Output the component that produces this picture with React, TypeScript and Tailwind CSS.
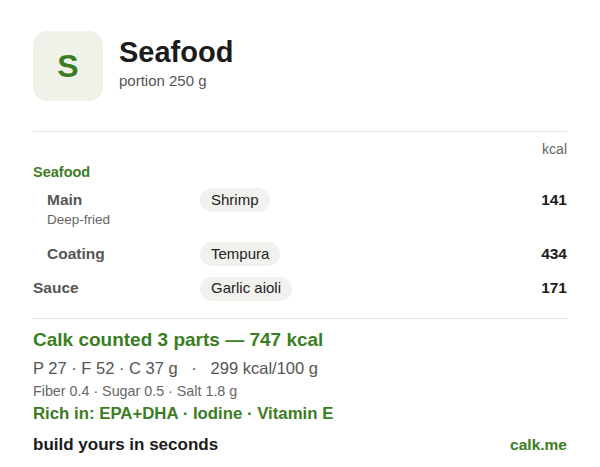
const items = [
  { label: "Main", note: "Deep-fried", pill: "Shrimp", kcal: 141, gap: "mt-[6px]" },
  { label: "Coating", note: "", pill: "Tempura", kcal: 434, gap: "mt-[14px]" },
];

const Pill = ({ text }: { text: string }) => (
  <span className="inline-flex h-6 items-center rounded-full bg-[#f1f1ed] px-[11px] text-[15px] text-[#222]">
    {text}
  </span>
);

export default function App() {
  return (
    <div className="min-h-[467px] w-[600px] bg-white px-[33px] pt-[31px] font-['Liberation_Sans',Arial,sans-serif]">
      <div className="flex items-start gap-4">
        <div className="flex h-[70px] w-[70px] items-center justify-center rounded-[14px] bg-[#eef2e8] text-[32px] font-bold text-[#3b7d23]">
          S
        </div>
        <div className="pt-[5px]">
          <div className="text-[29px] leading-8 font-bold text-[#1b1b1b]">Seafood</div>
          <div className="mt-[2px] text-[15px] text-[#555]">portion 250 g</div>
        </div>
      </div>

      <div className="mt-[30px] border-t border-[#e4e4e4]" />

      <div className="mt-[9px] text-right text-[14px] leading-4 text-[#666]">kcal</div>
      <div className="mt-[5px] text-[14.5px] leading-5 font-bold text-[#3b7d23]">Seafood</div>

      {items.map((it) => (
        <div key={it.label} className={`${it.gap} flex items-start`}>
          <div className="w-[167px] pl-[14px]">
            <div className="text-[15.5px] leading-6 font-bold text-[#555]">{it.label}</div>
            {it.note && <div className="text-[13.5px] leading-4 text-[#666]">{it.note}</div>}
          </div>
          <div className="flex-1">
            <Pill text={it.pill} />
          </div>
          <div className="text-[15.5px] leading-6 font-bold text-[#1b1b1b]">{it.kcal}</div>
        </div>
      ))}

      <div className="mt-[10px] flex items-start">
        <div className="w-[167px] text-[15.5px] leading-6 font-bold text-[#555]">Sauce</div>
        <div className="flex-1">
          <Pill text="Garlic aioli" />
        </div>
        <div className="text-[15.5px] leading-6 font-bold text-[#1b1b1b]">171</div>
      </div>

      <div className="mt-[17px] border-t border-[#e4e4e4]" />

      <div className="mt-[9px] text-[19px] leading-6 font-bold text-[#3b7d23]">
        Calk counted 3 parts — 747 kcal
      </div>
      <div className="mt-[6px] text-[16.5px] leading-5 text-[#555]">
        P 27 · F 52 · C 37 g &nbsp; · &nbsp; 299 kcal/100 g
      </div>
      <div className="mt-[3px] text-[14.3px] leading-5 text-[#666]">Fiber 0.4 · Sugar 0.5 · Salt 1.8 g</div>
      <div className="mt-[1px] text-[16.8px] leading-6 font-bold text-[#3b7d23]">
        Rich in: EPA+DHA · Iodine · Vitamin E
      </div>
      <div className="mt-[7px] flex items-center justify-between">
        <span className="text-[17px] leading-6 font-bold text-[#1b1b1b]">build yours in seconds</span>
        <span className="text-[15.5px] leading-6 font-bold text-[#3b7d23]">calk.me</span>
      </div>
    </div>
  );
}
